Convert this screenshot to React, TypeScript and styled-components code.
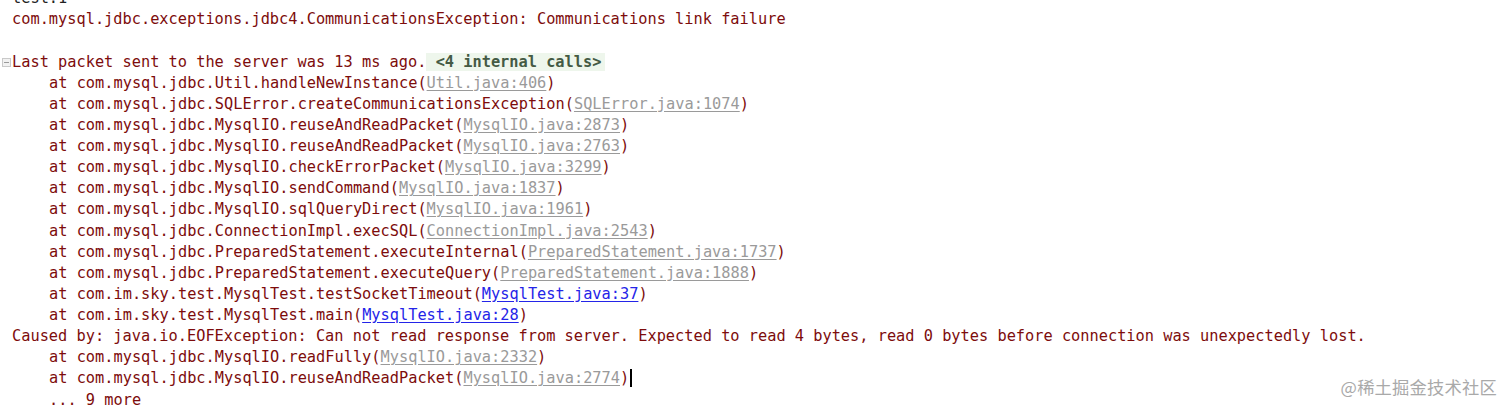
import React from "react";
import styled, { createGlobalStyle } from "styled-components";

const Global = createGlobalStyle`
  html, body { margin: 0; padding: 0; background: #ffffff; }
  body { overflow: hidden; }
`;

const Page = styled.div`
  position: relative;
  width: 1512px;
  height: 411px;
  overflow: hidden;
  background: #ffffff;
`;

const Console = styled.div`
  margin-top: -11.8px;
  padding-left: 12px;
  font-family: "DejaVu Sans Mono", "Liberation Mono", monospace;
  font-size: 15.3px;
  line-height: 21.13px;
  color: #7d0c0c;
  white-space: pre;
`;

const Line = styled.div<{ $indent?: boolean; $dark?: boolean }>`
  position: relative;
  height: 21.13px;
  padding-left: ${(p) => (p.$indent ? "37px" : "0")};
  color: ${(p) => (p.$dark ? "#222" : "inherit")};
`;

const Fold = styled.span`
  position: absolute;
  left: -10px;
  top: 6px;
  width: 7px;
  height: 7px;
  border: 1px solid #c9c9c9;
  background: #f2f2f2;
  &::after {
    content: "";
    position: absolute;
    left: 1px;
    top: 3px;
    width: 5px;
    height: 1px;
    background: #9a9a9a;
  }
`;

const Internal = styled.span`
  background: #eef6ec;
  color: #445a44;
  font-weight: bold;
  padding-right: 4px;
`;

const Link = styled.span<{ $blue?: boolean }>`
  color: ${(p) => (p.$blue ? "#2424e8" : "#9a9a9a")};
  text-decoration: underline;
  text-underline-offset: 2px;
`;

const Caret = styled.span`
  display: inline-block;
  width: 2px;
  height: 18px;
  background: #000;
  vertical-align: -4px;
  margin-left: 1px;
`;

const Watermark = styled.div`
  position: absolute;
  right: 15px;
  bottom: 12px;
  font-family: "Noto Sans CJK SC", "Noto Sans", sans-serif;
  font-size: 17.3px;
  color: #a9a9a9;
  letter-spacing: 0.2px;
`;

type Frame = { call: string; file: string; blue?: boolean };

const frames1: Frame[] = [
  { call: "com.mysql.jdbc.Util.handleNewInstance", file: "Util.java:406" },
  { call: "com.mysql.jdbc.SQLError.createCommunicationsException", file: "SQLError.java:1074" },
  { call: "com.mysql.jdbc.MysqlIO.reuseAndReadPacket", file: "MysqlIO.java:2873" },
  { call: "com.mysql.jdbc.MysqlIO.reuseAndReadPacket", file: "MysqlIO.java:2763" },
  { call: "com.mysql.jdbc.MysqlIO.checkErrorPacket", file: "MysqlIO.java:3299" },
  { call: "com.mysql.jdbc.MysqlIO.sendCommand", file: "MysqlIO.java:1837" },
  { call: "com.mysql.jdbc.MysqlIO.sqlQueryDirect", file: "MysqlIO.java:1961" },
  { call: "com.mysql.jdbc.ConnectionImpl.execSQL", file: "ConnectionImpl.java:2543" },
  { call: "com.mysql.jdbc.PreparedStatement.executeInternal", file: "PreparedStatement.java:1737" },
  { call: "com.mysql.jdbc.PreparedStatement.executeQuery", file: "PreparedStatement.java:1888" },
  { call: "com.im.sky.test.MysqlTest.testSocketTimeout", file: "MysqlTest.java:37", blue: true },
  { call: "com.im.sky.test.MysqlTest.main", file: "MysqlTest.java:28", blue: true },
];

const FrameLine = ({ f, caret }: { f: Frame; caret?: boolean }) => (
  <Line $indent>
    {"at " + f.call + "("}
    <Link $blue={f.blue}>{f.file}</Link>
    {")"}
    {caret && <Caret />}
  </Line>
);

export default function App() {
  return (
    <Page>
      <Global />
      <Console>
        <Line $dark>test:1</Line>
        <Line>com.mysql.jdbc.exceptions.jdbc4.CommunicationsException: Communications link failure</Line>
        <Line> </Line>
        <Line>
          <Fold />
          {"Last packet sent to the server was 13 ms ago."}
          <Internal>{" <4 internal calls>"}</Internal>
        </Line>
        {frames1.map((f, i) => (
          <FrameLine key={i} f={f} />
        ))}
        <Line>
          Caused by: java.io.EOFException: Can not read response from server. Expected to read 4 bytes, read 0 bytes before connection was unexpectedly lost.
        </Line>
        <FrameLine f={{ call: "com.mysql.jdbc.MysqlIO.readFully", file: "MysqlIO.java:2332" }} />
        <FrameLine f={{ call: "com.mysql.jdbc.MysqlIO.reuseAndReadPacket", file: "MysqlIO.java:2774" }} caret />
        <Line $indent>... 9 more</Line>
      </Console>
      <Watermark>@稀土掘金技术社区</Watermark>
    </Page>
  );
}
